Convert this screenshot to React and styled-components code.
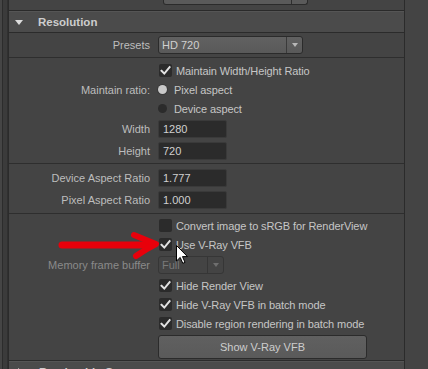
import React from "react";
import styled, { createGlobalStyle } from "styled-components";

const GlobalStyle = createGlobalStyle`
  html, body { margin: 0; padding: 0; background: #444444; }
  body {
    font-family: "Liberation Sans", Arial, sans-serif;
    font-size: 11px;
    color: #c4c4c4;
    overflow: hidden;
  }
  * { box-sizing: border-box; }
`;

const Screen = styled.div`
  position: relative;
  display: flex;
  width: 428px;
  height: 369px;
  overflow: hidden;
  background: #444444;
`;

const Gutter = styled.div`
  flex: 0 0 8px;
  background: linear-gradient(
    to right,
    #454545 0 2px,
    #2c2c2c 2px 3px,
    #3b3b3b 3px 7px,
    #303030 7px 8px
  );
`;

const Column = styled.div`
  flex: 0 0 397px;
  display: flex;
  flex-direction: column;
  border-left: 1px solid #2b2b2b;
  border-right: 1px solid #2b2b2b;
  & > * {
    flex-shrink: 0;
  }
`;

const RightPane = styled.div`
  flex: 1;
  background: #444444;
`;

const PrevSection = styled.div`
  height: 11px;
  padding-left: 154px;
  border-bottom: 1px solid #2a2a2a;
`;

const PrevButton = styled.div`
  display: flex;
  width: 145px;
  height: 5px;
  background: #5a5a5a;
  border: 1px solid #2b2b2b;
  border-top: none;
  border-radius: 0 0 3px 3px;
`;

const PrevButtonMain = styled.div`
  flex: 1;
  border-right: 1px solid #2e2e2e;
`;

const PrevButtonArrow = styled.div`
  flex: 0 0 15px;
`;

const Header = styled.div`
  display: flex;
  align-items: center;
  height: ${(p) => p.$h || 21}px;
  background: #4b4b4b;
  border-top: 1px solid #555555;
  border-bottom: 1px solid #2b2b2b;
  font-weight: bold;
  font-size: 11.5px;
  color: #cdcdcd;
  white-space: nowrap;
`;

const HeaderArrow = styled.span`
  width: 0;
  height: 0;
  margin-left: 6px;
  margin-right: 15px;
  ${(p) =>
    p.$open
      ? `border-left: 4.5px solid transparent;
         border-right: 4.5px solid transparent;
         border-top: 5px solid #dcdcdc;`
      : `border-top: 4.5px solid transparent;
         border-bottom: 4.5px solid transparent;
         border-left: 5px solid #dcdcdc;
         margin-left: 9px;
         margin-right: 16px;`}
`;

const Frame = styled.div`
  display: flex;
  flex-direction: column;
  border-bottom: 1px solid #2b2b2b;
`;

const Group = styled.div`
  display: flex;
  flex-direction: column;
  padding-top: ${(p) => p.$pt || 0}px;
  padding-bottom: ${(p) => p.$pb || 0}px;
  & + & {
    border-top: 1px solid #2e2e2e;
  }
`;

const Row = styled.div`
  display: grid;
  grid-template-columns: 141px auto;
  column-gap: 8px;
  align-items: center;
  height: ${(p) => p.$h || 19}px;
  flex-shrink: 0;
`;

const Label = styled.div`
  text-align: right;
  white-space: nowrap;
  color: ${(p) => (p.$disabled ? "#8a8a8a" : "#bdbdbd")};
`;

const Control = styled.div`
  display: flex;
  align-items: center;
  grid-column: 2;
`;

const Combo = styled.div`
  display: flex;
  width: ${(p) => p.$w}px;
  height: 18px;
  border: 1px solid ${(p) => (p.$disabled ? "#363636" : "#2b2b2b")};
  border-radius: 3px;
  background: ${(p) =>
    p.$disabled ? "#444444" : "linear-gradient(#616161, #595959)"};
  color: ${(p) => (p.$disabled ? "#7a7a7a" : "#d0d0d0")};
`;

const ComboText = styled.div`
  flex: 1;
  padding-left: 3px;
  line-height: 16px;
  border-right: 1px solid ${(p) => (p.$disabled ? "#363636" : "#3a3a3a")};
`;

const ComboArrow = styled.div`
  flex: 0 0 ${(p) => p.$w}px;
  display: flex;
  align-items: center;
  justify-content: center;
  &::after {
    content: "";
    width: 0;
    height: 0;
    border-left: 3.5px solid transparent;
    border-right: 3.5px solid transparent;
    border-top: 4px solid ${(p) => (p.$disabled ? "#6f6f6f" : "#b8b8b8")};
  }
`;

const Field = styled.div`
  width: 69px;
  height: 18px;
  background: #2b2b2b;
  border: 1px solid #3a3a3a;
  border-radius: 2px;
  padding-left: 4px;
  line-height: 17px;
  color: #d0d0d0;
`;

const CheckBox = styled.span`
  display: inline-flex;
  align-items: center;
  justify-content: center;
  width: 13px;
  height: 13px;
  margin-left: 1px;
  margin-right: 4px;
  background: #2b2b2b;
  border-radius: 2px;
`;

const Radio = styled.span`
  display: inline-block;
  width: 9px;
  height: 9px;
  margin-right: 7px;
  border-radius: 50%;
  background: ${(p) => (p.$on ? "#c9c9c9" : "#2b2b2b")};
  box-shadow: ${(p) => (p.$on ? "0 0 0 1px #3a3a3a" : "none")};
`;

const OptionText = styled.span`
  white-space: nowrap;
  color: #c6c6c6;
  letter-spacing: -0.1px;
`;

const Button = styled.div`
  width: 209px;
  height: 24px;
  margin-top: 2px;
  background: linear-gradient(#606060, #5a5a5a);
  border: 1px solid #2b2b2b;
  border-radius: 3px;
  text-align: center;
  line-height: 22px;
  color: #cdcdcd;
`;

const Overlay = styled.svg`
  position: absolute;
  pointer-events: none;
`;

const Check = () => (
  <svg width="11" height="11" viewBox="0 0 11 11">
    <path
      d="M1.5 5.8 L4.3 8.6 L9.6 2.2"
      fill="none"
      stroke="#e2e2e2"
      strokeWidth="2"
      strokeLinecap="square"
    />
  </svg>
);

const CheckRow = ({ children, checked = true }) => (
  <Row>
    <Control>
      <CheckBox>{checked && <Check />}</CheckBox>
      <OptionText>{children}</OptionText>
    </Control>
  </Row>
);

const FieldRow = ({ label, value }) => (
  <Row $h={22}>
    <Label>{label}</Label>
    <Control>
      <Field>{value}</Field>
    </Control>
  </Row>
);

export default function App() {
  return (
    <>
      <GlobalStyle />
      <Screen>
        <Gutter />
        <Column>
          <PrevSection>
            <PrevButton>
              <PrevButtonMain />
              <PrevButtonArrow />
            </PrevButton>
          </PrevSection>
          <Header $h={22}>
            <HeaderArrow $open />
            Resolution
          </Header>
          <Frame>
            <Group $pt={3} $pb={3}>
              <Row $h={18}>
                <Label>Presets</Label>
                <Control>
                  <Combo $w={145}>
                    <ComboText>HD 720</ComboText>
                    <ComboArrow $w={15} />
                  </Combo>
                </Control>
              </Row>
            </Group>
            <Group $pt={3} $pb={1}>
              <CheckRow>Maintain Width/Height Ratio</CheckRow>
              <Row>
                <Label>Maintain ratio:</Label>
                <Control>
                  <Radio $on />
                  <OptionText>Pixel aspect</OptionText>
                </Control>
              </Row>
              <Row>
                <Control>
                  <Radio />
                  <OptionText>Device aspect</OptionText>
                </Control>
              </Row>
              <FieldRow label="Width" value="1280" />
              <FieldRow label="Height" value="720" />
            </Group>
            <Group $pt={3} $pb={2}>
              <FieldRow label="Device Aspect Ratio" value="1.777" />
              <FieldRow label="Pixel Aspect Ratio" value="1.000" />
            </Group>
            <Group $pt={2} $pb={1}>
              <CheckRow checked={false}>
                Convert image to sRGB for RenderView
              </CheckRow>
              <CheckRow>Use V-Ray VFB</CheckRow>
              <Row $h={22}>
                <Label $disabled>Memory frame buffer</Label>
                <Control>
                  <Combo $w={66} $disabled>
                    <ComboText $disabled>Full</ComboText>
                    <ComboArrow $w={15} $disabled />
                  </Combo>
                </Control>
              </Row>
              <CheckRow>Hide Render View</CheckRow>
              <CheckRow>Hide V-Ray VFB in batch mode</CheckRow>
              <CheckRow>Disable region rendering in batch mode</CheckRow>
              <Row $h={26}>
                <Control>
                  <Button>Show V-Ray VFB</Button>
                </Control>
              </Row>
            </Group>
          </Frame>
          <Header $h={21}>
            <HeaderArrow />
            Renderable Cameras
          </Header>
        </Column>
        <RightPane />

        <Overlay
          style={{ left: 56, top: 229 }}
          width="106"
          height="32"
          viewBox="0 0 106 32"
        >
          <path
            d="M6 16 L92 16"
            stroke="#e8000b"
            strokeWidth="7"
            strokeLinecap="round"
          />
          <path
            d="M78 6 Q90 11 100 15 Q90 20 80 27"
            fill="none"
            stroke="#e8000b"
            strokeWidth="6"
            strokeLinecap="round"
            strokeLinejoin="round"
          />
        </Overlay>

        <Overlay
          style={{ left: 176, top: 245 }}
          width="13"
          height="20"
          viewBox="0 0 13 20"
        >
          <path
            d="M0.5 0.5 L0.5 16 L4.2 12.4 L6.8 18.3 L9 17.4 L6.5 11.6 L11.5 11.6 Z"
            fill="#ffffff"
            stroke="#000000"
            strokeWidth="1"
            strokeLinejoin="miter"
          />
        </Overlay>
      </Screen>
    </>
  );
}
